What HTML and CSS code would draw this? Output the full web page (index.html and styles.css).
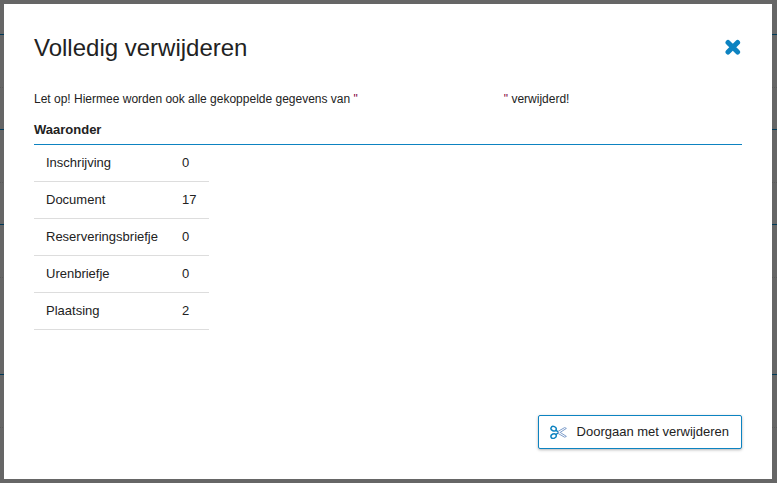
FILE: index.html
```html
<!DOCTYPE html>
<html lang="nl">
<head>
  <meta charset="UTF-8" />
  <meta name="viewport" content="width=device-width, initial-scale=1.0"/>
  <title>Volledig verwijderen</title>
  <link rel="stylesheet" href="styles.css">
</head>
<body>
  <!-- page behind the dialog -->
  <div class="page" aria-hidden="true">
    <div class="page-head"></div>
    <div class="page-section"></div>
    <div class="page-section"></div>
    <div class="page-section large"></div>
    <div class="page-section last"></div>
  </div>
  <div class="overlay">
    <div class="modal" role="dialog" aria-modal="true" aria-labelledby="modal-title">
      <header class="modal-header">
        <h1 id="modal-title">Volledig verwijderen</h1>
        <button type="button" class="close" aria-label="Sluiten">
          <svg viewBox="0 0 18 18" width="18" height="18"><path d="M4 3.5L13.6 13.1M13.6 3.5L4 13.1"/></svg>
        </button>
      </header>
      <p class="warning">Let op! Hiermee worden ook alle gekoppelde gegevens van <span class="quote">"</span><span class="record-name"></span><span class="quote">"</span> verwijderd!</p>
      <h2>Waaronder</h2>
      <table class="linked">
        <tbody>
          <tr><td>Inschrijving</td><td>0</td></tr>
          <tr><td>Document</td><td>17</td></tr>
          <tr><td>Reserveringsbriefje</td><td>0</td></tr>
          <tr><td>Urenbriefje</td><td>0</td></tr>
          <tr><td>Plaatsing</td><td>2</td></tr>
        </tbody>
      </table>
      <footer class="modal-footer">
        <button type="button" class="confirm">
          <svg viewBox="0 0 17 14" width="17" height="14">
            <g class="handles">
              <ellipse cx="3.6" cy="3.7" rx="2.7" ry="2.2" transform="rotate(22 3.6 3.7)"/>
              <ellipse cx="3.6" cy="11.1" rx="2.7" ry="2.2" transform="rotate(-22 3.6 11.1)"/>
              <path d="M5.8 5.2L8 6.8M5.8 9.6L8 8"/>
            </g>
            <path class="blades" d="M8 6.4L14.6 2.6L16.4 3.4L10.2 7.4L16.4 11.4L14.6 12.2L8 8.4"/>
            <circle class="pivot" cx="8.6" cy="7.4" r="0.7"/>
          </svg>
          <span>Doorgaan met verwijderen</span>
        </button>
      </footer>
    </div>
  </div>
</body>
</html>
```
FILE: styles.css
```css
* { box-sizing: border-box; }
body {
  margin: 0;
  font-family: "Liberation Sans", Arial, sans-serif;
  font-size: 13px;
  line-height: 16px;
  color: #222;
  background-color: #666;
}
.page {
  display: flex;
  flex-direction: column;
  height: 100vh;
  overflow: hidden;
}
.page-head {
  flex: none;
  height: 35px;
  border-bottom: 1px solid #003a58;
}
.page-section {
  flex: none;
  height: 95px;
  padding-top: 52px;
  border-bottom: 1px solid #003a58;
}
.page-section::before {
  content: "";
  display: block;
  border-top: 1px dotted #5a5a5a;
}
.page-section.large {
  height: 150px;
}
.page-section.last {
  flex: 1;
  height: auto;
  border-bottom: none;
}
.overlay {
  position: fixed;
  inset: 0;
  display: flex;
  padding: 4px 5px 4px 4px;
}
.modal {
  flex: 1;
  display: flex;
  flex-direction: column;
  padding: 30px;
  background: #fff;
}
.modal-header {
  display: flex;
  justify-content: space-between;
  align-items: center;
  margin-bottom: 29px;
}
h1 {
  margin: 0;
  font-size: 24px;
  font-weight: normal;
  line-height: 28px;
}
.close {
  display: flex;
  padding: 0;
  border: none;
  background: none;
  cursor: pointer;
}
.close svg {
  fill: none;
  stroke: #0d83c1;
  stroke-width: 5;
  stroke-linecap: round;
}
.warning {
  margin: 0;
  font-size: 12px;
}
.quote {
  color: #800040;
}
.record-name {
  display: inline-block;
  width: 146px;
}
h2 {
  margin: 15px 0 0;
  padding-bottom: 6px;
  font-size: 13px;
  line-height: 16px;
  border-bottom: 1px solid #0d83c1;
}
.linked {
  align-self: flex-start;
  border-collapse: separate;
  border-spacing: 0;
}
.linked td {
  padding: 10px 12px;
  border-bottom: 1px solid #ddd;
}
.linked td:last-child {
  padding-right: 13px;
}
.modal-footer {
  display: flex;
  justify-content: flex-end;
  margin-top: auto;
}
.confirm {
  display: flex;
  align-items: center;
  gap: 10px;
  height: 34px;
  padding: 0 12px 0 11px;
  font-family: inherit;
  font-size: 13px;
  color: #222;
  background: #fff;
  border: 1px solid #0d83c1;
  border-radius: 2px;
  box-shadow: 0 1px 3px rgba(0, 0, 0, 0.3);
  cursor: pointer;
}
.confirm span {
  padding-bottom: 2px;
}
.confirm svg {
  fill: none;
}
.handles {
  stroke: #0d83c1;
  stroke-width: 1.5;
}
.blades {
  stroke: #7d9dcb;
  stroke-width: 1;
}
.pivot {
  fill: #7d9dcb;
}
```
